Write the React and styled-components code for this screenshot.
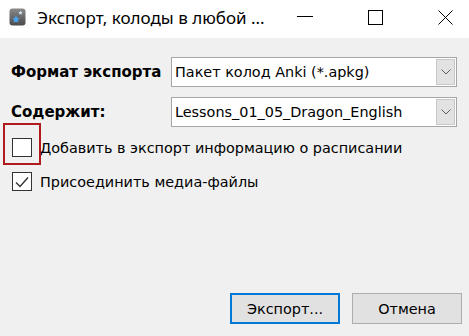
import styled, { createGlobalStyle } from "styled-components";

const Global = createGlobalStyle`
  html, body {
    margin: 0;
    padding: 0;
    background: #f0f0f0;
  }
  * {
    box-sizing: border-box;
  }
`;

const Window = styled.div`
  display: flex;
  flex-direction: column;
  width: 469px;
  height: 336px;
  font-family: "DejaVu Sans", "Liberation Sans", sans-serif;
  font-size: 14.4px;
  color: #000;
  background: #f0f0f0;
  overflow: hidden;
`;

const TitleBar = styled.div`
  display: flex;
  align-items: center;
  height: 38px;
  padding: 0 0 4px 9px;
  margin-right: -11px;
  background: #fff;
`;

const Title = styled.div`
  flex: 1;
  margin-left: 11px;
  font-family: "Noto Sans", "Liberation Sans", sans-serif;
  font-size: 17px;
  white-space: nowrap;
`;

const Caption = styled.div`
  display: flex;
  align-items: center;
  justify-content: center;
  width: 70px;
  height: 34px;
`;

const Content = styled.div`
  position: relative;
  flex: 1;
  display: flex;
  flex-direction: column;
  padding: 19px 12px 12px 11px;
`;

const Form = styled.div`
  display: grid;
  grid-template-columns: 160px 286px;
  row-gap: 10px;
  align-items: center;
`;

const Label = styled.div`
  font-weight: bold;
  font-size: 15px;
  white-space: nowrap;
  overflow: hidden;
`;

const Combo = styled.div`
  display: flex;
  align-items: stretch;
  height: 30px;
  padding: 1px;
  background: #fff;
  border: 1px solid #a6a6a6;
`;

const ComboText = styled.div`
  flex: 1;
  display: flex;
  align-items: center;
  padding-left: 2px;
  white-space: nowrap;
`;

const ComboArrow = styled.div`
  display: flex;
  align-items: center;
  justify-content: center;
  width: 19px;
  background: #e2e2e2;
  border: 1px solid #c8c8c8;
`;

const Checks = styled.div`
  display: flex;
  flex-direction: column;
  gap: 15px;
  margin-top: 11px;
`;

const CheckRow = styled.label`
  display: flex;
  align-items: center;
  gap: 8px;
  padding-left: 1px;
`;

const Box = styled.span`
  display: flex;
  align-items: center;
  justify-content: center;
  width: 20px;
  height: 19px;
  background: #fff;
  border: 1px solid #333;
`;

const Highlight = styled.div`
  position: absolute;
  left: 3px;
  top: 85px;
  width: 38px;
  height: 42px;
  border: 2px solid #b0191e;
`;

const Buttons = styled.div`
  display: flex;
  justify-content: flex-end;
  gap: 12px;
  margin-top: auto;
  margin-right: -5px;
`;

const Button = styled.button`
  width: 110px;
  height: 31px;
  font-family: "DejaVu Sans", "Liberation Sans", sans-serif;
  font-size: 14.4px;
  color: #000;
  background: #e1e1e1;
  border: ${(p) => (p.$primary ? "2px solid #0078d7" : "1px solid #adadad")};
  padding: 0;
`;

const AppIcon = () => (
  <svg width="17" height="18" viewBox="0 0 17 18">
    <defs>
      <linearGradient id="ig" x1="0" y1="0" x2="0" y2="1">
        <stop offset="0" stopColor="#8a8a8a" />
        <stop offset="1" stopColor="#4a4a4a" />
      </linearGradient>
    </defs>
    <rect x="0.5" y="0.5" width="16" height="17" rx="3" fill="url(#ig)" />
    <path d="M11.5 2.5l.7 1.4 1.5.2-1.1 1 .3 1.5-1.4-.7-1.4.7.3-1.5-1.1-1 1.5-.2z" fill="#cfe3f7" />
    <path d="M7 7.5l1.2 2.4 2.6.4-1.9 1.8.5 2.6L7 13.5l-2.4 1.2.5-2.6-1.9-1.8 2.6-.4z" fill="#4aa3f0" />
  </svg>
);

const Chevron = () => (
  <svg width="10" height="6" viewBox="0 0 10 6">
    <path d="M0.5 0.5L5 5L9.5 0.5" fill="none" stroke="#606060" strokeWidth="1" />
  </svg>
);

const Check = () => (
  <svg width="14" height="12" viewBox="0 0 14 12">
    <path d="M1 6.5L5 10.5L13 1.5" fill="none" stroke="#333" strokeWidth="1.4" />
  </svg>
);

export default function App() {
  return (
    <>
      <Global />
      <Window>
        <TitleBar>
          <AppIcon />
          <Title>Экспорт, колоды в любой ...</Title>
          <Caption>
            <svg width="16" height="2" viewBox="0 0 16 2">
              <rect width="16" height="1" fill="#000" />
            </svg>
          </Caption>
          <Caption>
            <svg width="15" height="15" viewBox="0 0 15 15">
              <rect x="0.5" y="0.5" width="14" height="14" fill="none" stroke="#000" />
            </svg>
          </Caption>
          <Caption>
            <svg width="15" height="15" viewBox="0 0 15 15">
              <path d="M0.5 0.5L14.5 14.5M14.5 0.5L0.5 14.5" stroke="#000" strokeWidth="1" />
            </svg>
          </Caption>
        </TitleBar>
        <Content>
          <Form>
            <Label>Формат экспорта</Label>
            <Combo>
              <ComboText>Пакет колод Anki (*.apkg)</ComboText>
              <ComboArrow>
                <Chevron />
              </ComboArrow>
            </Combo>
            <Label>Содержит:</Label>
            <Combo>
              <ComboText>Lessons_01_05_Dragon_English</ComboText>
              <ComboArrow>
                <Chevron />
              </ComboArrow>
            </Combo>
          </Form>
          <Checks>
            <CheckRow>
              <Box />
              Добавить в экспорт информацию о расписании
            </CheckRow>
            <CheckRow>
              <Box>
                <Check />
              </Box>
              Присоединить медиа-файлы
            </CheckRow>
          </Checks>
          <Highlight />
          <Buttons>
            <Button $primary>Экспорт...</Button>
            <Button>Отмена</Button>
          </Buttons>
        </Content>
      </Window>
    </>
  );
}
